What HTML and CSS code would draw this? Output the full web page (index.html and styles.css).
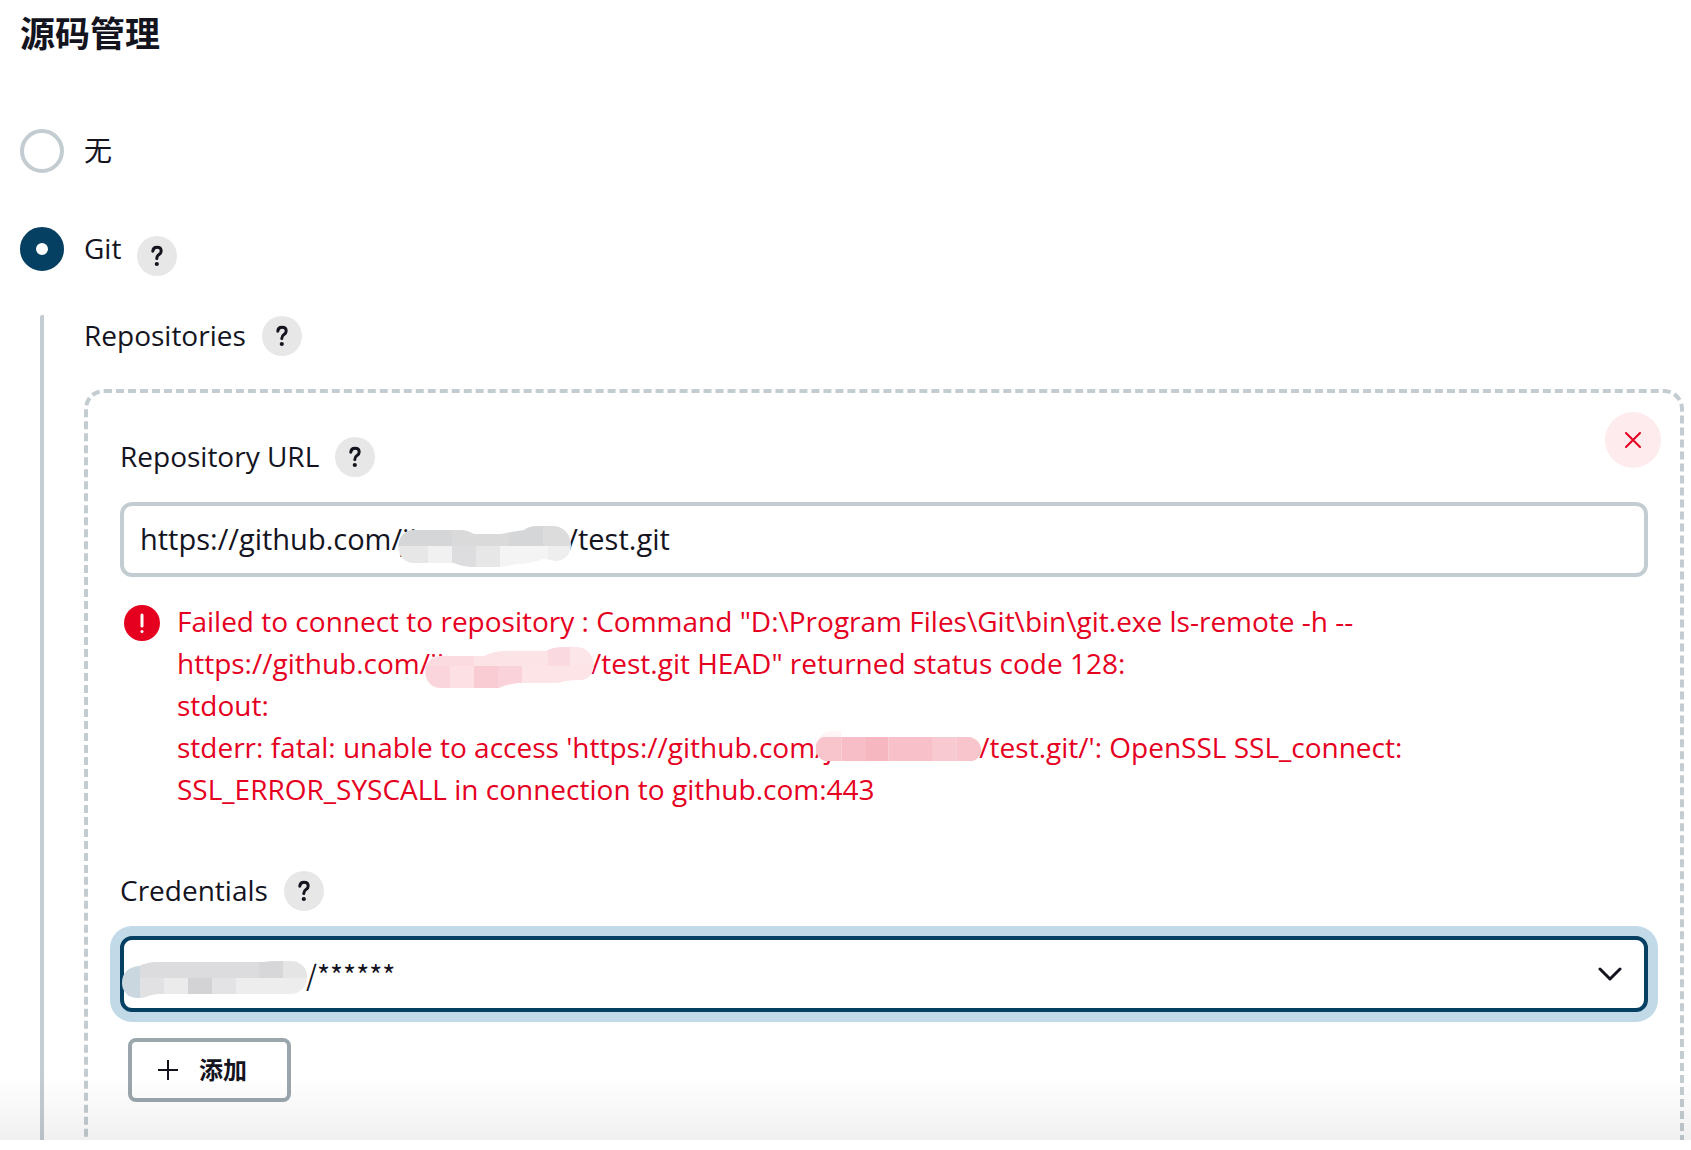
FILE: index.html
```html
<!DOCTYPE html>
<html lang="zh-CN">
<head>
    <meta charset="UTF-8">
    <title>源码管理</title>
    <link rel="stylesheet" href="styles.css">
</head>
<body>
    <form class="config">
        <h1 class="section-title">源码管理</h1>

        <div class="radio-row">
            <input type="radio" class="radio" name="scm" id="scm-none">
            <label for="scm-none">无</label>
        </div>

        <div class="radio-row">
            <input type="radio" class="radio" name="scm" id="scm-git" checked>
            <label for="scm-git">Git</label>
            <button type="button" class="help help-low" aria-label="Git">
                <svg viewBox="0 0 40 40"><path d="M15.8 15.2q.3-3.9 4.2-3.9 4.2 0 4.2 3.8 0 2.1-2.2 3.5-2.2 1.4-2.2 3.8"/><circle cx="19.8" cy="28" r="2.1"/></svg>
            </button>
        </div>

        <div class="nested">
            <div class="label-row">
                <label>Repositories</label>
                <button type="button" class="help" aria-label="Repositories">
                    <svg viewBox="0 0 40 40"><path d="M15.8 15.2q.3-3.9 4.2-3.9 4.2 0 4.2 3.8 0 2.1-2.2 3.5-2.2 1.4-2.2 3.8"/><circle cx="19.8" cy="28" r="2.1"/></svg>
                </button>
            </div>

            <div class="repo">
                <button type="button" class="remove" aria-label="Delete">
                    <svg viewBox="0 0 16 16"><path d="M1 1l14 14M15 1L1 15"/></svg>
                </button>

                <div class="label-row">
                    <label for="repo-url">Repository URL</label>
                    <button type="button" class="help" aria-label="Repository URL">
                        <svg viewBox="0 0 40 40"><path d="M15.8 15.2q.3-3.9 4.2-3.9 4.2 0 4.2 3.8 0 2.1-2.2 3.5-2.2 1.4-2.2 3.8"/><circle cx="19.8" cy="28" r="2.1"/></svg>
                    </button>
                </div>

                <div class="field">
                    <input type="text" class="control" id="repo-url" value="https://github.com/ji                    /test.git">
                    <svg class="mask mask-url" viewBox="0 0 176 42">
                        <clipPath id="clip-url"><path d="M17 4H64Q70 4 77 8H104Q120 5 127 4Q132 0 140 0H156C168 0 174 10 174 19C174 28 168 35 158 35Q152 33 146 33Q134 38 120 38Q108 41 96 41H76Q66 41 57 37H17C-4 37-4 4 17 4Z"/></clipPath>
                        <g clip-path="url(#clip-url)">
                            <path fill="#d5d6d8" d="M0 0h55v20H0z"/>
                            <path fill="#dadadb" d="M55 0h57v20H55z"/>
                            <path fill="#d5d6d8" d="M112 0h34v20h-34z"/>
                            <path fill="#dcdcdc" d="M146 0h30v20h-30z"/>
                            <path fill="#e7e7e8" d="M0 20h31v22H0z"/>
                            <path fill="#f1f1f1" d="M31 20h24v22H31z"/>
                            <path fill="#dddddf" d="M55 20h24v22H55z"/>
                            <path fill="#e7e7e8" d="M79 20h24v22H79z"/>
                            <path fill="#f4f4f4" d="M103 20h48v22h-48z"/>
                            <path fill="#eee" d="M151 20h25v22h-25z"/>
                        </g>
                    </svg>
                </div>

                <div class="error">
                    <svg class="error-icon" viewBox="0 0 36 36"><circle cx="18" cy="18" r="18"/><path d="M18 10v11"/><path d="M18 26.500v.1"/></svg>
                    <p class="error-text">
                        Failed to connect to repository : Command "D:\Program Files\Git\bin\git.exe ls-remote -h --<br>
                        https://github.com/<span class="hidden-name">ji<svg class="mask mask-line" viewBox="0 0 170 42">
                            <clipPath id="clip-line"><path d="M17 9H60Q70 4 82 4H122Q128 0 140 0H152C174 0 176 33 156 33Q142 33 134 36H96Q86 36 75 41H17C-4 41-4 9 17 9Z"/></clipPath>
                            <g clip-path="url(#clip-line)">
                                <path fill="#fbdbe0" d="M0 0h50v19H0z"/>
                                <path fill="#fbe3e6" d="M50 0h74v19H50z"/>
                                <path fill="#fadae0" d="M124 0h22v19h-22z"/>
                                <path fill="#fce6e9" d="M146 0h24v19h-24z"/>
                                <path fill="#fad5dc" d="M0 19h26v23H0z"/>
                                <path fill="#fce0e4" d="M26 19h24v23H26z"/>
                                <path fill="#f9cbd3" d="M50 19h24v23H50z"/>
                                <path fill="#fad3da" d="M74 19h24v23H74z"/>
                                <path fill="#fce4e7" d="M98 19h72v23H98z"/>
                            </g>
                        </svg></span>/test.git HEAD" returned status code 128:<br>
                        stdout:<br>
                        stderr: fatal: unable to access 'https://github.com/<span class="hidden-name hidden-name-short">j<svg class="mask mask-flat" viewBox="0 0 142 32" preserveAspectRatio="none">
                            <clipPath id="clip-flat"><path d="M6 6H132C144 10 144 26 134 30H8C-3 26-3 10 6 6Z"/></clipPath>
                            <path fill="#fff5f6" d="M2 8Q6 0 14 0H22V8Z"/>
                            <g clip-path="url(#clip-flat)">
                                <path fill="#f8c5cd" d="M0 5h22v26H0z"/>
                                <path fill="#f8bec7" d="M22 5h20v26H22z"/>
                                <path fill="#f7b7c1" d="M42 5h20v26H42z"/>
                                <path fill="#f8c0c9" d="M62 5h38v26H62z"/>
                                <path fill="#f9c9d1" d="M100 5h20v26h-20z"/>
                                <path fill="#f8c5cd" d="M120 5h22v26h-22z"/>
                            </g>
                        </svg></span>/test.git/': OpenSSL SSL_connect:<br>
                        SSL_ERROR_SYSCALL in connection to github.com:443
                    </p>
                </div>

                <div class="label-row">
                    <label for="credentials">Credentials</label>
                    <button type="button" class="help" aria-label="Credentials">
                        <svg viewBox="0 0 40 40"><path d="M15.8 15.2q.3-3.9 4.2-3.9 4.2 0 4.2 3.8 0 2.1-2.2 3.5-2.2 1.4-2.2 3.8"/><circle cx="19.8" cy="28" r="2.1"/></svg>
                    </button>
                </div>

                <div class="field">
                    <select class="control select" id="credentials">
                        <option>ji&nbsp;&nbsp;&nbsp;&nbsp;&nbsp;&nbsp;&nbsp;&nbsp;&nbsp;&nbsp;&nbsp;&nbsp;&nbsp;&nbsp;&nbsp;&nbsp;&nbsp;&nbsp;&nbsp;&nbsp;&nbsp;&nbsp;&nbsp;&nbsp;/******</option>
                    </select>
                    <svg class="mask mask-cred" viewBox="0 0 186 38">
                        <clipPath id="clip-cred"><path d="M34 1H140Q148 0 156 0H168C192 0 190 33 168 33H36Q28 34 24 36C8 40 0 32 0 22C0 12 6 6 17 5Q26 1 34 1Z"/></clipPath>
                        <g clip-path="url(#clip-cred)">
                            <path fill="#cbd7df" d="M0 0h18v38H0z"/>
                            <path fill="#dcdcde" d="M18 0h119v17H18z"/>
                            <path fill="#d7d7da" d="M137 0h24v17h-24z"/>
                            <path fill="#e5e5e5" d="M161 0h25v17h-25z"/>
                            <path fill="#e1e1e3" d="M18 17h24v21H18z"/>
                            <path fill="#ebebeb" d="M42 17h24v21H42z"/>
                            <path fill="#d3d3d5" d="M66 17h24v21H66z"/>
                            <path fill="#e3e3e6" d="M90 17h24v21H90z"/>
                            <path fill="#ededed" d="M114 17h72v21h-72z"/>
                        </g>
                    </svg>
                    <svg class="chevron" viewBox="0 0 24 14"><path d="M2 2l10 10L22 2"/></svg>
                </div>

                <button type="button" class="add">
                    <svg viewBox="0 0 20 20"><path d="M10 0v20M0 10h20"/></svg>
                    添加
                </button>
            </div>
        </div>
    </form>
</body>
</html>
```
FILE: styles.css
```css
* {
    box-sizing: border-box;
}

body {
    margin: 0;
    background: #fff;
    color: #14141f;
    font-family: "Open Sans", "Noto Sans CJK SC", sans-serif;
    font-size: 28px;
    line-height: 42px;
}

button, input, select {
    margin: 0;
    padding: 0;
    color: inherit;
    font: inherit;
}

svg {
    display: block;
    fill: none;
}

label {
    padding-bottom: 2px;
}

.config {
    position: relative;
    display: flex;
    flex-direction: column;
    height: calc(100vh - 10px);
    padding: 8px 7px 0 20px;
    overflow: hidden;
}

/* fade above the bottom edge */
.config::after {
    content: "";
    position: absolute;
    left: 0;
    right: 0;
    bottom: 0;
    height: 64px;
    background: linear-gradient(rgba(0, 0, 0, 0), rgba(0, 0, 0, 0.06));
    pointer-events: none;
}

.section-title {
    margin: 0 0 69px;
    font-size: 35px;
    line-height: 52px;
    font-weight: 700;
}

.radio-row {
    display: flex;
    align-items: center;
    height: 44px;
    margin-bottom: 54px;
}

.radio {
    appearance: none;
    width: 44px;
    height: 44px;
    margin-right: 20px;
    border: 4px solid #c3ccd1;
    border-radius: 50%;
    background: #fff;
}

.radio:checked {
    border: 16px solid #053f61;
}

.help {
    width: 40px;
    height: 40px;
    margin-left: 16px;
    border: none;
    border-radius: 50%;
    background: #e7e7e7;
    cursor: pointer;
}

.help path {
    stroke: #14141f;
    stroke-width: 3;
    stroke-linecap: round;
}

.help circle {
    fill: #14141f;
}

.help-low {
    margin-top: 14px;
}

.nested {
    flex: none;
    margin: -10px 0 0 20px;
    padding-left: 40px;
    border-left: 4px solid #c3ccd1;
    border-radius: 2px;
}

.label-row {
    display: flex;
    align-items: center;
    height: 42px;
}

.repo {
    position: relative;
    height: 900px;
    margin-top: 32px;
    padding: 43px 32px 0;
    border: 4px dashed #c3ccd1;
    border-radius: 20px;
}

.remove {
    position: absolute;
    top: 19px;
    right: 19px;
    display: grid;
    place-items: center;
    width: 56px;
    height: 56px;
    border: none;
    border-radius: 50%;
    background: #fdebed;
}

.remove svg {
    width: 16px;
    height: 16px;
    stroke: #e6001f;
    stroke-width: 2;
    stroke-linecap: round;
}

.field {
    position: relative;
    margin-top: 24px;
}

.control {
    display: block;
    width: 100%;
    height: 75px;
    padding: 0 16px 2px;
    border: 4px solid #c3ccd1;
    border-radius: 12px;
    background: #fff;
    font-size: 29px;
    outline: none;
}

.select {
    appearance: none;
    height: 76px;
    padding-bottom: 0;
    border-color: #053f61;
    box-shadow: 0 0 0 10px #c2d9e7;
    font-family: "Noto Sans CJK SC", sans-serif;
    font-size: 28px;
}

.mask {
    position: absolute;
}

.mask-url {
    top: 24px;
    left: 277px;
    width: 176px;
    height: 42px;
}

.mask-cred {
    top: 25px;
    left: 2px;
    width: 186px;
    height: 38px;
}

.chevron {
    position: absolute;
    top: 31px;
    right: 26px;
    width: 24px;
    height: 14px;
    stroke: #14141f;
    stroke-width: 3;
    stroke-linecap: round;
    stroke-linejoin: round;
}

.error {
    display: flex;
    gap: 17px;
    margin: 23px 0 60px;
    padding-left: 4px;
    color: #e6001f;
}

.error-icon {
    flex: none;
    width: 36px;
    height: 36px;
    margin-top: 5px;
    fill: #e6001f;
    stroke-linecap: round;
}

.error-icon path {
    stroke: #fff;
    stroke-width: 3;
}

.error-text {
    margin: 0;
    white-space: nowrap;
}

.hidden-name {
    position: relative;
    display: inline-block;
    width: 161px;
}

.hidden-name-short {
    width: 154px;
}

.mask-line {
    top: 5px;
    left: -6px;
    width: 170px;
    height: 42px;
}

.mask-flat {
    top: 5px;
    left: -9px;
    width: 166px;
    height: 32px;
}

.add {
    display: flex;
    align-items: center;
    gap: 21px;
    height: 64px;
    margin: 26px 0 0 8px;
    padding: 0 40px 0 26px;
    border: 4px solid #9aa6ac;
    border-radius: 8px;
    background: transparent;
    font-size: 24px;
    font-weight: 700;
}

.add svg {
    width: 20px;
    height: 20px;
    stroke: #14141f;
    stroke-width: 2;
}
```
